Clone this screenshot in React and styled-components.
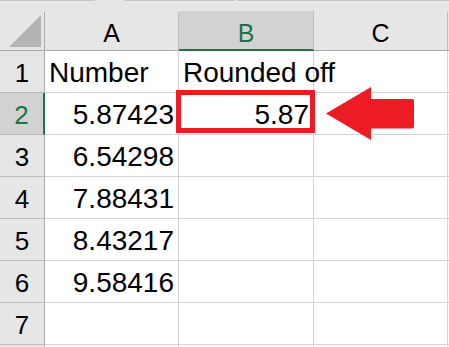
import styled, { createGlobalStyle } from 'styled-components';

const GlobalStyle = createGlobalStyle`
  body {
    margin: 0;
    background: #ffffff;
    overflow: hidden;
  }
`;

const Sheet = styled.div`
  position: relative;
  width: 449px;
  height: 347px;
  overflow: hidden;
  background: #ffffff;
  font-family: 'Liberation Sans', Arial, sans-serif;
`;

const TopStrip = styled.div`
  display: flex;
  align-items: flex-start;
  height: 12px;
  background: #e6e6e6;
`;

const StripLine = styled.div`
  height: 1px;
  width: ${p => p.$width}px;
  margin-right: ${p => p.$after || 0}px;
  background: #c4c4c4;
  flex: ${p => (p.$grow ? 1 : 'none')};
`;

const Grid = styled.div`
  display: grid;
  grid-template-columns: 45px 134px 135px 134px 1fr;
  grid-template-rows: 39px;
  grid-auto-rows: 42px;
`;

const Corner = styled.div`
  display: flex;
  align-items: flex-end;
  justify-content: flex-end;
  padding: 0 3px 3px 0;
  background: #e6e6e6;
  border-right: 1px solid #ababab;
  border-bottom: 1px solid #ababab;
  box-sizing: border-box;
`;

const ColHeader = styled.div`
  display: flex;
  align-items: flex-end;
  justify-content: center;
  box-sizing: border-box;
  padding-bottom: ${p => (p.$selected ? 2 : 3)}px;
  margin-top: ${p => (p.$selected ? -1 : 0)}px;
  background: ${p => (p.$selected ? '#d2d2d2' : '#e6e6e6')};
  border-right: 1px solid #bcbcbc;
  border-bottom: ${p => (p.$selected ? '2px solid #217346' : '1px solid #ababab')};
  color: ${p => (p.$selected ? '#217346' : '#000')};
  font-size: 25px;
  line-height: 28px;
`;

const Filler = styled.div`
  background: ${p => (p.$header ? '#e6e6e6' : '#fff')};
  border-bottom: 1px solid ${p => (p.$header ? '#ababab' : '#d4d4d4')};
  box-sizing: border-box;
`;

const RowHeader = styled.div`
  display: flex;
  align-items: flex-end;
  justify-content: center;
  box-sizing: border-box;
  padding-bottom: 4px;
  background: ${p => (p.$selected ? '#d2d2d2' : '#e6e6e6')};
  border-right: ${p => (p.$selected ? '2px solid #217346' : '1px solid #ababab')};
  border-bottom: 1px solid #bcbcbc;
  color: ${p => (p.$selected ? '#217346' : '#000')};
  font-size: 26px;
  line-height: 30px;
`;

const Cell = styled.div`
  position: relative;
  display: flex;
  align-items: flex-end;
  justify-content: ${p => (p.$align === 'right' ? 'flex-end' : 'flex-start')};
  box-sizing: border-box;
  padding: 0 4px 4px 4px;
  border-right: 1px solid #d4d4d4;
  border-bottom: 1px solid #d4d4d4;
  color: #000;
  font-size: 28px;
  line-height: 30px;
  white-space: nowrap;
`;

const Highlight = styled.div`
  position: absolute;
  left: -3px;
  top: -3px;
  right: -2px;
  bottom: 1px;
  border: 5px solid #ed1c24;
  pointer-events: none;
`;

const Arrow = styled.svg`
  position: absolute;
  left: 320px;
  top: 84px;
`;

// the last row only peeks in at the bottom edge, its number is out of view
const rows = [
  { n: 1, a: 'Number', b: 'Rounded off' },
  { n: 2, a: '5.87423', b: '5.87' },
  { n: 3, a: '6.54298', b: '' },
  { n: 4, a: '7.88431', b: '' },
  { n: 5, a: '8.43217', b: '' },
  { n: 6, a: '9.58416', b: '' },
  { n: 7, a: '', b: '' },
  { n: 8, a: '', b: '', hidden: true },
];

export default function App() {
  return (
    <>
      <GlobalStyle />
      <Sheet>
        <TopStrip>
          <StripLine $width={95} $after={30} />
          <StripLine $width={110} $after={3} />
          <StripLine $grow />
        </TopStrip>
        <Grid>
          <Corner>
            <svg width="32" height="32" viewBox="0 0 32 32">
              <polygon points="32,0 32,32 0,32" fill="#b4b4b4" />
            </svg>
          </Corner>
          <ColHeader>A</ColHeader>
          <ColHeader $selected>B</ColHeader>
          <ColHeader>C</ColHeader>
          <Filler $header />

          {rows.map(({ n, a, b, hidden }) => {
            const align = n === 1 ? 'left' : 'right';
            return [
              <RowHeader key={`h${n}`} $selected={n === 2}>
                {hidden ? '' : n}
              </RowHeader>,
              <Cell key={`a${n}`} $align={align}>{a}</Cell>,
              <Cell key={`b${n}`} $align={align}>
                {b}
                {n === 2 && <Highlight />}
              </Cell>,
              <Cell key={`c${n}`} />,
              <Filler key={`f${n}`} />,
            ];
          })}
        </Grid>
        <Arrow width="100" height="60" viewBox="0 0 100 60">
          <path
            d="M6 29.5 L51 3 L51 15 L92 15 Q94 15 94 17 L94 42.5 Q94 44.5 92 44.5 L51 44.5 L51 56 Z"
            fill="#ed1c24"
          />
        </Arrow>
      </Sheet>
    </>
  );
}
